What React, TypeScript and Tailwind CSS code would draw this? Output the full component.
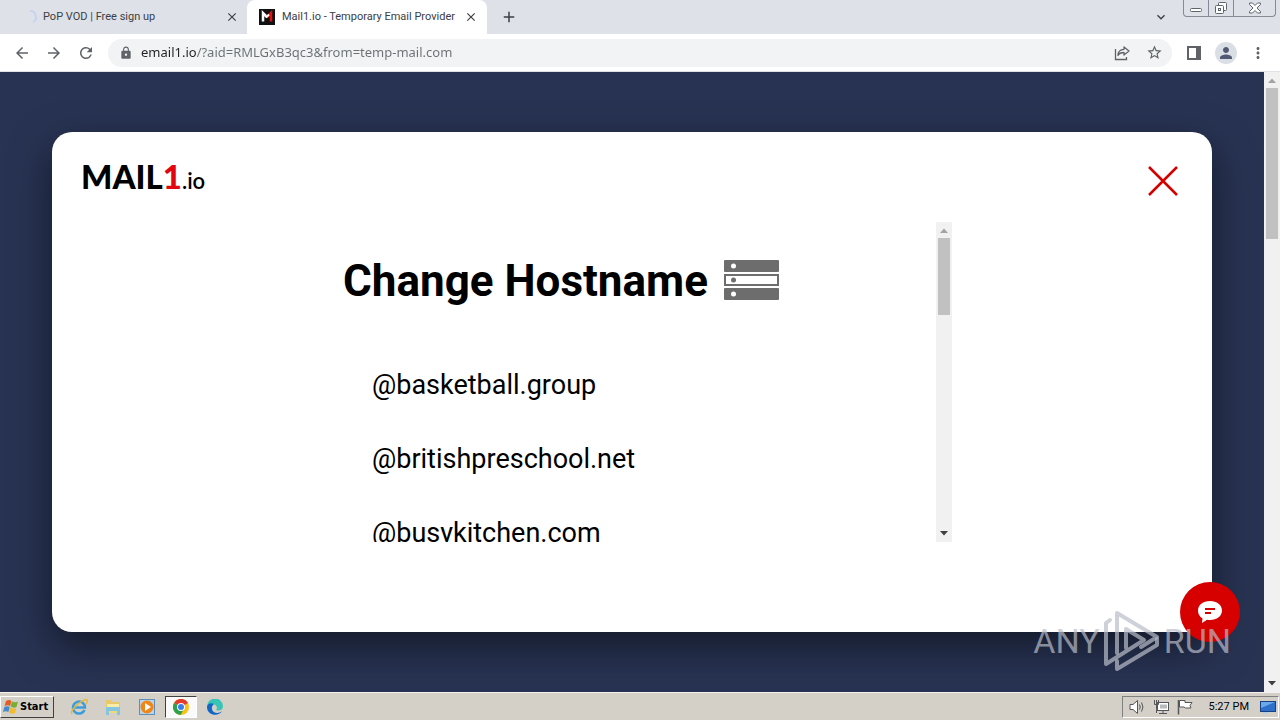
import type { ReactNode } from "react";
import {
  MdAdd,
  MdArrowBack,
  MdArrowForward,
  MdClose,
  MdKeyboardArrowDown,
  MdLock,
  MdMoreVert,
  MdPerson,
  MdRefresh,
  MdStarBorder,
} from "react-icons/md";

const hostnames = ["@basketball.group", "@britishpreschool.net", "@busykitchen.com"];

function Favicon() {
  return (
    <svg viewBox="0 0 16 16" className="size-4 shrink-0" aria-hidden="true">
      <rect width="16" height="16" fill="#111" />
      <path d="M4 12.500V4l4 4" fill="none" stroke="#fff" strokeWidth="2.500" />
      <path d="M8 8l4-4v8.500" fill="none" stroke="#e01010" strokeWidth="2.500" />
      <path d="M7 8.500L10 5.500" stroke="#fff" strokeWidth="2" />
    </svg>
  );
}

function TabStrip() {
  return (
    <header className="flex h-[34px] shrink-0 bg-[#dee1e8] text-[11px] text-[#3c4043]">
      <div className="flex w-[247px] shrink-0 items-center pr-2 pl-[22px]">
        <svg viewBox="0 0 16 16" className="mr-[5px] size-4 shrink-0" aria-hidden="true">
          <path d="M8 2a6 6 0 0 1 3 11.2" fill="none" stroke="#c8d3f0" strokeWidth="2" />
        </svg>
        <span className="flex-1 truncate pt-px">PoP VOD | Free sign up</span>
        <button aria-label="Close tab">
          <MdClose className="size-[14px]" />
        </button>
      </div>
      <div className="flex w-60 shrink-0 items-center rounded-t-lg bg-white pr-[9px] pl-3">
        <Favicon />
        <span className="ml-[7px] flex-1 truncate pt-px">Mail1.io - Temporary Email Provider</span>
        <button aria-label="Close tab">
          <MdClose className="size-[14px]" />
        </button>
      </div>
      <button aria-label="New tab" className="ml-[13px]">
        <MdAdd className="size-[18px]" />
      </button>
      <div className="flex-1" />
      <button aria-label="Search tabs" className="mr-[14px]">
        <MdKeyboardArrowDown className="size-4" />
      </button>
      <div className="mr-1 flex h-[17px] rounded-b border border-t-0 border-[#858a94] text-[#5f646e]">
        <button aria-label="Minimize" className="flex w-[25px] items-center justify-center border-r border-[#858a94]">
          <svg viewBox="0 0 12 12" className="size-3" fill="#fff" stroke="currentColor" aria-hidden="true">
            <rect x=".5" y="6.500" width="11" height="3" rx="1" />
          </svg>
        </button>
        <button aria-label="Restore" className="flex w-[25px] items-center justify-center border-r border-[#858a94]">
          <svg viewBox="0 0 12 12" className="size-3" fill="#fff" stroke="currentColor" aria-hidden="true">
            <rect x="3.500" y=".5" width="8" height="8" rx="1" />
            <rect x=".5" y="3.500" width="8" height="8" rx="1" />
            <rect x="3.500" y="6.500" width="2" height="2" />
          </svg>
        </button>
        <button aria-label="Close" className="flex w-[41px] items-center justify-center">
          <svg viewBox="0 0 12 12" className="size-3" fill="#fff" stroke="currentColor" aria-hidden="true">
            <path d="M.5 1h3L6 3.500 8.500 1h3v1.500L8 6l3.500 3.500V11h-3L6 8.500 3.500 11h-3V9.500L4 6 .5 2.500z" />
          </svg>
        </button>
      </div>
    </header>
  );
}

function Toolbar() {
  return (
    <div className="flex h-[38px] shrink-0 items-center border-b border-[#dfe1e5] bg-white text-[#5f6368]">
      <nav className="flex shrink-0 gap-3.5 pl-[13px]">
        <button aria-label="Back">
          <MdArrowBack className="size-[18px]" />
        </button>
        <button aria-label="Forward">
          <MdArrowForward className="size-[18px]" />
        </button>
        <button aria-label="Reload">
          <MdRefresh className="size-[18px]" />
        </button>
      </nav>
      <div className="ml-[13px] flex h-7 flex-1 items-center rounded-full bg-[#f1f3f4] pr-[9px] pl-[11px]">
        <MdLock className="size-[14px] shrink-0" />
        <input
          aria-label="Address"
          defaultValue="email1.io/?aid=RMLGxB3qc3&from=temp-mail.com"
          className="ml-2 min-w-0 flex-1 bg-linear-to-r from-[#202124] from-[56px] to-[#6b7075] to-[56px] bg-clip-text font-['Noto_Sans',sans-serif] text-[13px] text-transparent outline-none"
        />
        <button aria-label="Share this page" className="mr-4">
          <svg viewBox="0 0 16 16" className="size-4" fill="none" stroke="currentColor" strokeWidth="1.300" aria-hidden="true">
            <path d="M1.500 4v10.500h11V12" />
            <path d="M10 2l5 4-5 4V7.500C7 7.500 5 8.500 4 10.500 4 7 6 4.500 10 4.300z" strokeLinejoin="round" />
          </svg>
        </button>
        <button aria-label="Bookmark this tab">
          <MdStarBorder className="size-[17px]" />
        </button>
      </div>
      <button aria-label="Side panel" className="ml-[15px]">
        <svg viewBox="0 0 14 14" className="size-[14px]" aria-hidden="true">
          <rect x="1" y="1" width="12" height="12" fill="none" stroke="currentColor" strokeWidth="2" />
          <rect x="9" width="5" height="14" fill="currentColor" />
        </svg>
      </button>
      <button
        aria-label="Profile"
        className="ml-[14px] flex size-[22px] items-center justify-center rounded-full bg-[#dadfe6] text-[#505a73]"
      >
        <MdPerson className="size-[18px]" />
      </button>
      <button aria-label="Menu" className="mr-[13px] ml-3">
        <MdMoreVert className="size-[18px]" />
      </button>
    </div>
  );
}

function ScrollBar({ children }: { children: ReactNode }) {
  return (
    <div className="flex w-4 shrink-0 flex-col items-center bg-[#f1f1f1]" aria-hidden="true">
      <svg viewBox="0 0 16 16" className="size-4 shrink-0">
        <path d="M4 11h8L8 6.500z" fill="#a3a3a3" />
      </svg>
      {children}
      <svg viewBox="0 0 16 16" className="mt-auto size-4 shrink-0">
        <path d="M4 5h8L8 9.500z" fill="#404040" />
      </svg>
    </div>
  );
}

function HostIcon() {
  return (
    <svg viewBox="0 0 55 40" className="h-10 w-[55px] shrink-0" fill="#6d6d6d" aria-hidden="true">
      <rect width="55" height="12" rx="1" />
      <rect x="1" y="15" width="53" height="10" fill="#fff" stroke="#6d6d6d" strokeWidth="2" />
      <rect y="28" width="55" height="12" rx="1" />
      <circle cx="9.500" cy="6" r="2.500" fill="#fff" />
      <circle cx="9.500" cy="20" r="2.500" />
      <circle cx="9.500" cy="34" r="2.500" fill="#fff" />
    </svg>
  );
}

function HostnameDialog() {
  return (
    <section
      role="dialog"
      aria-labelledby="dialog-title"
      className="flex-1 rounded-[20px] bg-white shadow-[0_15px_40px_rgba(0,0,0,0.5)]"
    >
      <div className="flex h-[90px] items-center justify-between pt-2 pr-[34px] pl-[29px]">
        <a href="#" aria-label="Mail1.io" className="pb-2 font-['Lato',sans-serif] text-[33px] font-black text-black">
          MAIL<span className="text-[#e20613]">1</span>
          <span className="text-[22px] font-semibold">.io</span>
        </a>
        <button aria-label="Close">
          <svg viewBox="0 0 30 30" className="size-[30px]" stroke="#d40000" strokeWidth="2.500" aria-hidden="true">
            <path d="M1 1l28 28M29 1L1 29" />
          </svg>
        </button>
      </div>
      <div className="mx-auto flex h-80 max-w-[640px] overflow-hidden text-black">
        <div className="flex-1 overflow-hidden">
          <div className="flex items-center gap-4 pt-[26px] pl-[31px]">
            <h1 id="dialog-title" className="pt-[2px] text-[44px] leading-[62px] font-bold whitespace-nowrap">
              Change Hostname
            </h1>
            <HostIcon />
          </div>
          <ul className="pt-9 pl-[60px]">
            {hostnames.map((name) => (
              <li key={name} className="h-[74px]">
                <button className="text-[27px] leading-[74px]">{name}</button>
              </li>
            ))}
          </ul>
        </div>
        <ScrollBar>
          <div className="h-[77px] w-3 bg-[#c1c1c1]" />
        </ScrollBar>
      </div>
    </section>
  );
}

function ChatButton() {
  return (
    <button
      aria-label="Open chat"
      className="absolute right-10 bottom-[50px] flex size-[60px] items-center justify-center rounded-full bg-[#d60000]"
    >
      <svg viewBox="0 0 24 22" className="h-[22px] w-6" aria-hidden="true">
        <path d="M12 0c7 0 12 4 12 9.500S19 19 12 19c-1 0-2 0-3-.3L4 22l.5-4.500C1.500 15.500 0 13 0 9.500 0 4 5 0 12 0z" fill="#fff" />
        <path d="M7 8h10M7 12h6" stroke="#d60000" strokeWidth="2" />
      </svg>
    </button>
  );
}

function Watermark() {
  return (
    <div
      className="pointer-events-none absolute right-[49px] bottom-5 flex h-[62px] items-center gap-1 font-['Roboto',sans-serif] text-[34px] text-[#b9bdc9]/70"
    >
      <span>ANY</span>
      <svg viewBox="0 0 56 62" className="h-[62px] w-14" fill="none" stroke="currentColor" strokeWidth="4" strokeLinejoin="round" strokeLinecap="round" aria-hidden="true">
        <path d="M13 43V3l40 24-16 10" />
        <path d="M6 10L2 13v41l38-24L22 19v19" />
        <path d="M13 51v8l40-24v-6" />
      </svg>
      <span>RUN</span>
    </div>
  );
}

function StartLogo() {
  return (
    <svg viewBox="0 0 16 16" className="size-4" aria-hidden="true">
      <path d="M3 2q3-2 5.500 0L7 7Q4.500 5.500 1.500 7z" fill="#e45c24" />
      <path d="M9 2.500q3 1.500 6 0L13.500 8q-3 1.500-6-.5z" fill="#79ad34" />
      <path d="M1.300 8q3-1.500 5.500 0l-1.500 5q-2.500-1.500-5.300 0z" fill="#4488d0" />
      <path d="M7.300 8.500q3 2 6 .5L12 14q-3 1.500-6-.5z" fill="#f2bb2c" />
    </svg>
  );
}

function Taskbar() {
  return (
    <footer className="flex h-7 shrink-0 items-center border-t border-[#f4f2ee] bg-[#d4d0c8] pt-px text-[11px] text-black">
      <button className="flex h-[22px] w-[54px] items-center gap-px border border-t-white border-r-[#404040] border-b-[#404040] border-l-white pl-[2px] font-['DejaVu_Sans_Condensed','DejaVu_Sans',sans-serif] font-bold">
        <StartLogo />
        Start
      </button>
      <nav className="ml-[9px] flex items-center gap-[2px]">
        <button aria-label="Internet Explorer" className="flex h-[22px] w-8 items-center justify-center">
          <svg viewBox="0 0 18 18" className="size-[18px]" fill="none" aria-hidden="true">
            <path d="M14.500 12A6 6 0 1 1 15 9.500H4" stroke="#3d9ddb" strokeWidth="2.500" />
            <path d="M2 16C-1 12 15-1 17 2c.7 1-.3 3-1 4" stroke="#e8b83c" strokeWidth="1.500" />
          </svg>
        </button>
        <button aria-label="Windows Explorer" className="flex h-[22px] w-8 items-center justify-center">
          <svg viewBox="0 0 18 18" className="size-[18px]" aria-hidden="true">
            <path d="M2 2h5l1 2h8v9H2z" fill="#e9c866" />
            <path d="M3 6h12v3H3z" fill="#f8eda8" />
            <path d="M2 9h14v8h-3v-4H5v4H2z" fill="#85c5df" />
            <path d="M5 13h8v2H5z" fill="#eed97b" />
          </svg>
        </button>
        <button aria-label="Media Player" className="flex h-[22px] w-8 items-center justify-center">
          <svg viewBox="0 0 18 18" className="size-[18px]" aria-hidden="true">
            <rect x="1.500" y="1.500" width="15" height="15" fill="#b9d5e9" stroke="#5e8fb8" />
            <circle cx="9" cy="9" r="6.500" fill="#f08518" />
            <path d="M7 5l6 4-6 4z" fill="#fff" />
          </svg>
        </button>
        <button
          aria-label="Chrome"
          className="flex h-[22px] w-8 items-center justify-center border border-t-[#404040] border-r-white border-b-white border-l-[#404040] bg-[#fbfafa]"
        >
          <svg viewBox="0 0 16 16" className="size-4" aria-hidden="true">
            <circle cx="8" cy="8" r="8" fill="#fbc116" />
            <path d="M8 8L1 4a8 8 0 0 1 14 0z" fill="#e33b2e" />
            <path d="M8 8L1 4a8 8 0 0 0 6.500 12L11 10z" fill="#2da14e" />
            <circle cx="8" cy="8" r="4" fill="#fff" />
            <circle cx="8" cy="8" r="3" fill="#3b7ded" />
          </svg>
        </button>
        <button aria-label="Edge" className="flex h-[22px] w-8 items-center justify-center">
          <svg viewBox="0 0 16 16" className="size-4" aria-hidden="true">
            <path d="M0 8a8 8 0 0 1 16-1c0 3-2 4.500-5 4.500-2 0-2-1-1-2C10 7 8 5 5 5 2 5 0 7 0 8z" fill="#39c5b5" />
            <path d="M0 8c0-3 4-5 7-3-4 3-2 9 3 9 2 0 4-1 5-2-3 6-15 5-15-4z" fill="#1367c4" />
          </svg>
        </button>
      </nav>
      <div className="flex-1" />
      <div className="mr-px flex h-[22px] items-center border border-t-[#808080] border-r-white border-b-white border-l-[#808080] pr-[2px] pl-[6px]">
        <div className="mr-4 flex gap-2 text-[#55565a]">
          <svg viewBox="0 0 16 16" className="size-4" fill="#fff" stroke="currentColor" aria-label="Volume" role="img">
            <path d="M1 5.500h3L8.500 1.500v13L4 10.500H1z" />
            <path d="M10.500 5.500q1.500 2.500 0 5M12.500 3.500q3 4.500 0 9" fill="none" />
          </svg>
          <svg viewBox="0 0 16 16" className="size-4" fill="#fff" stroke="currentColor" aria-label="Network" role="img">
            <rect x="4.500" y="3.500" width="11" height="8" />
            <rect x="7" y="5.500" width="7" height="4" fill="#b7b9ba" stroke="none" />
            <path d="M6 14.500h8M10 12v2.500M1.500 1v4.500h4V1M3.500 1v9.500V14" fill="none" />
          </svg>
          <svg viewBox="0 0 16 16" className="size-4" fill="#fff" stroke="currentColor" aria-label="Action center" role="img">
            <path d="M2.500 1.500h5.500v2h7l-2 3 1 2.500H8.500L7 8H2.500z" />
            <path d="M1.500 1v14.500" strokeWidth="1.500" />
          </svg>
        </div>
        <time className="mr-[11px]">5:27 PM</time>
        <button aria-label="Show desktop">
          <svg viewBox="0 0 16 14" className="h-[14px] w-4" aria-hidden="true">
            <rect x=".5" y="1.500" width="15" height="10" fill="#2d6fc9" stroke="#173f83" />
            <path d="M1 2h14L1 8z" fill="#6ca9ec" />
            <path d="M3 12h5v1.500H3z" fill="#a9cef2" />
          </svg>
        </button>
      </div>
    </footer>
  );
}

export default function App() {
  return (
    <div className="flex min-h-screen flex-col font-['Roboto',sans-serif]">
      <TabStrip />
      <Toolbar />
      <div className="relative flex flex-1">
        <main className="flex flex-1 overflow-hidden bg-[#283353] px-[52px] py-[60px]">
          <HostnameDialog />
        </main>
        <ScrollBar>
          <div className="h-[151px] w-3 bg-[#c1c1c1]" />
        </ScrollBar>
        <ChatButton />
        <Watermark />
      </div>
      <Taskbar />
    </div>
  );
}
